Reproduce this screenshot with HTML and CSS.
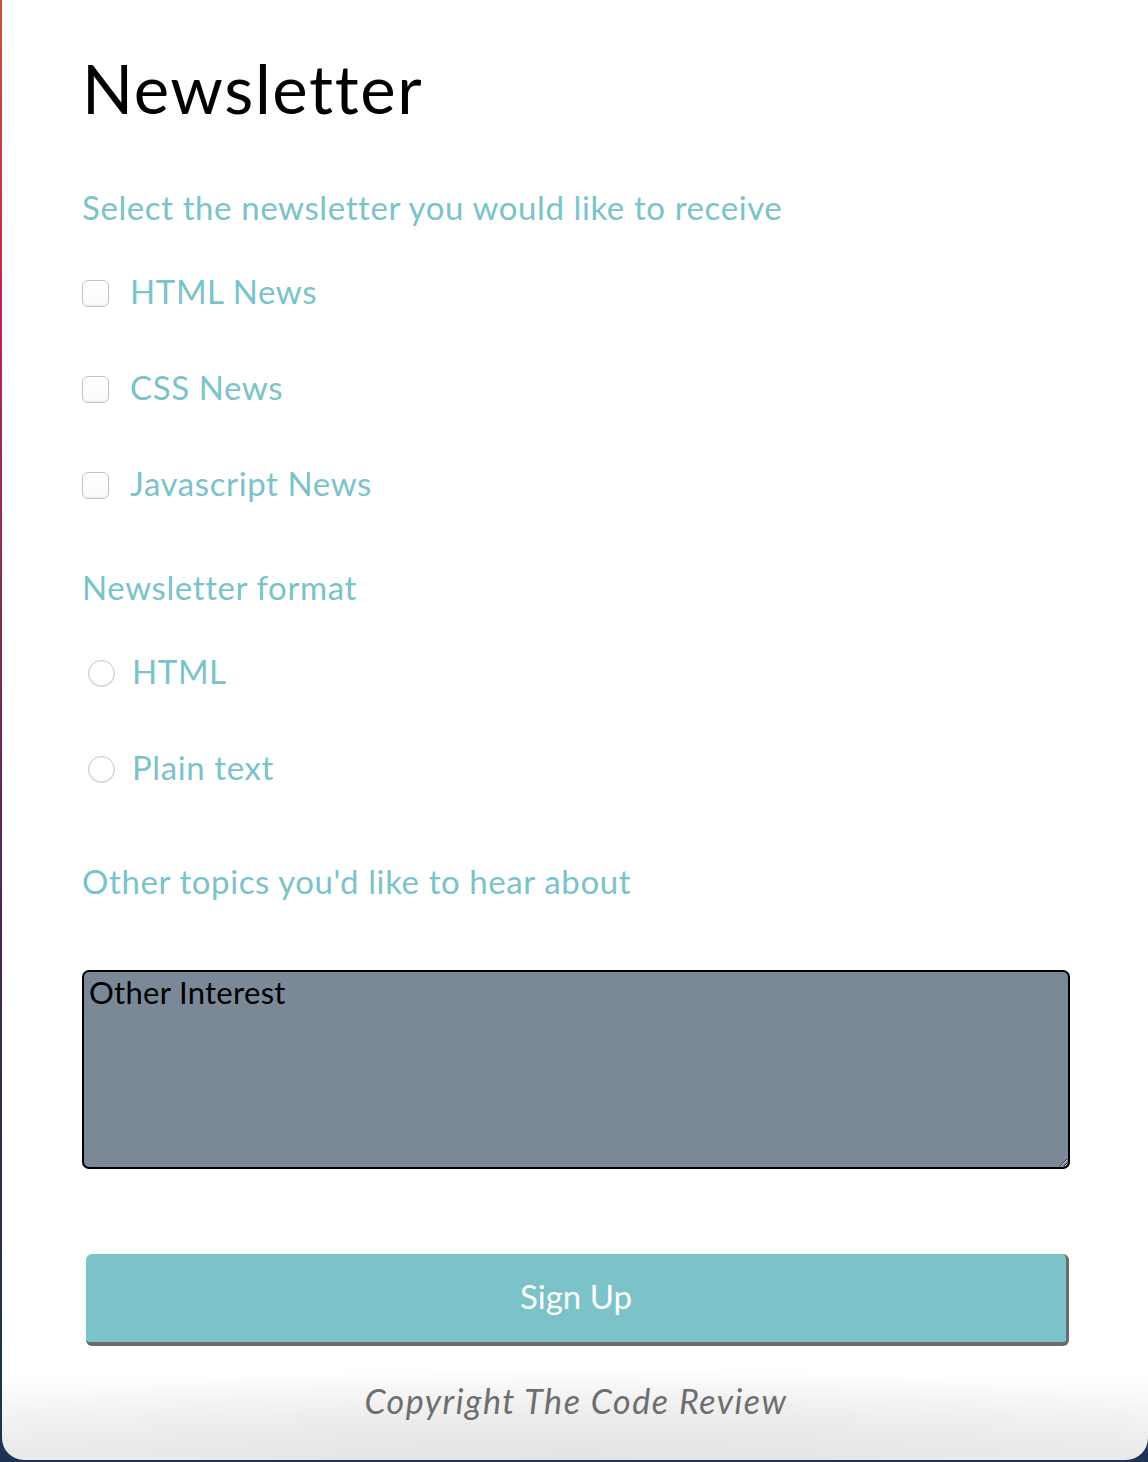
FILE: index.html
```html
<!DOCTYPE html>
<html lang="en">
<head>
<meta charset="utf-8">
<title>Newsletter</title>
<link rel="stylesheet" href="styles.css">
</head>
<body>
<div class="card">
  <form class="form">
    <h1 class="title">Newsletter</h1>
    <p class="question q-first">Select the newsletter you would like to receive</p>
    <label class="option option-first"><input type="checkbox" class="check"><span class="option-text">HTML News</span></label>
    <label class="option"><input type="checkbox" class="check"><span class="option-text">CSS News</span></label>
    <label class="option"><input type="checkbox" class="check"><span class="option-text">Javascript News</span></label>
    <p class="question q-format">Newsletter format</p>
    <label class="option option-first"><input type="radio" name="format" class="radio"><span class="option-text">HTML</span></label>
    <label class="option"><input type="radio" name="format" class="radio"><span class="option-text">Plain text</span></label>
    <p class="question q-topics">Other topics you'd like to hear about</p>
    <textarea class="interest">Other Interest</textarea>
    <button type="button" class="signup">Sign Up</button>
  </form>
  <footer class="copyright">Copyright The Code Review</footer>
</div>
</body>
</html>
```

FILE: styles.css
```css
html, body {
  margin: 0;
  padding: 0;
}

body {
  width: 1148px;
  height: 1462px;
  overflow: hidden;
  background: linear-gradient(to bottom, #ca533a 0%, #b7264f 22%, #8a2a55 40%, #4b2a52 62%, #2a2c50 80%, #1d3354 100%);
  font-family: "Lato", "Noto Sans", sans-serif;
}

.card {
  margin-left: 2px;
  width: 1146px;
  height: 1460px;
  box-sizing: border-box;
  padding: 48px 78px 0 80px;
  border-radius: 0 0 22px 22px;
  background:
    radial-gradient(ellipse 70% 90px at 50% 100%, #e4e4e4 0%, rgba(255,255,255,0) 100%),
    linear-gradient(to bottom, #ffffff 0%, #ffffff calc(100% - 90px), #ececec 100%);
  display: flex;
  flex-direction: column;
}

.form {
  display: flex;
  flex-direction: column;
  margin: 0;
}

.title {
  margin: 0;
  height: 80px;
  line-height: 80px;
  font-size: 67px;
  letter-spacing: 1.6px;
  font-weight: 400;
  color: #000;
}

.question {
  margin: 0;
  height: 40px;
  line-height: 37px;
  font-size: 33px;
  letter-spacing: 0.6px;
  color: #7ac3ca;
}

.q-first { margin-top: 61px; }
.q-format { margin-top: 64px; }
.q-topics { margin-top: 74px; }

.option {
  display: flex;
  align-items: center;
  height: 40px;
  margin-top: 56px;
  font-size: 33px;
  letter-spacing: 0.6px;
  color: #7ac3ca;
}

.option-first { margin-top: 44px; }

.option-text {
  line-height: 37px;
  padding-bottom: 3px;
}

.check {
  appearance: none;
  -webkit-appearance: none;
  margin: 0 21px 0 0;
  width: 27px;
  height: 27px;
  box-sizing: border-box;
  border: 1px solid #c4c4c4;
  border-radius: 6px;
  background: linear-gradient(to bottom, #ffffff 0%, #fbfbfb 100%);
  box-shadow: inset 0 -1px 1px rgba(0,0,0,0.06);
}

.radio {
  appearance: none;
  -webkit-appearance: none;
  margin: 0 17px 0 6px;
  width: 27px;
  height: 27px;
  box-sizing: border-box;
  border: 1px solid #c4c4c4;
  border-radius: 50%;
  background: radial-gradient(circle at 50% 40%, #ffffff 55%, #f0f0f0 100%);
  box-shadow: inset 0 -1px 1px rgba(0,0,0,0.06);
}

.interest {
  margin: 67px 0 0 0;
  width: 988px;
  height: 199px;
  box-sizing: border-box;
  border: 2px solid #000;
  border-radius: 7px;
  background: #7b8898;
  color: #000;
  font-family: "Lato", "Noto Sans", sans-serif;
  font-size: 31px;
  letter-spacing: 0.3px;
  line-height: 40px;
  padding: 0 5px;
  resize: both;
  outline: none;
}

.signup {
  margin: 85px 0 0 4px;
  width: 983px;
  height: 92px;
  box-sizing: border-box;
  border: none;
  border-right: 3px solid #6b6b6b;
  border-bottom: 4px solid #6b6b6b;
  border-radius: 6px;
  background: #7bc3c9;
  color: #ffffff;
  font-family: "Lato", "Noto Sans", sans-serif;
  font-size: 33px;
  padding: 0 0 5px 0;
  cursor: pointer;
}

.copyright {
  margin-top: 35px;
  height: 40px;
  line-height: 40px;
  text-align: center;
  font-size: 34px;
  letter-spacing: 1.5px;
  font-style: italic;
  color: #6e6e6e;
}
```
